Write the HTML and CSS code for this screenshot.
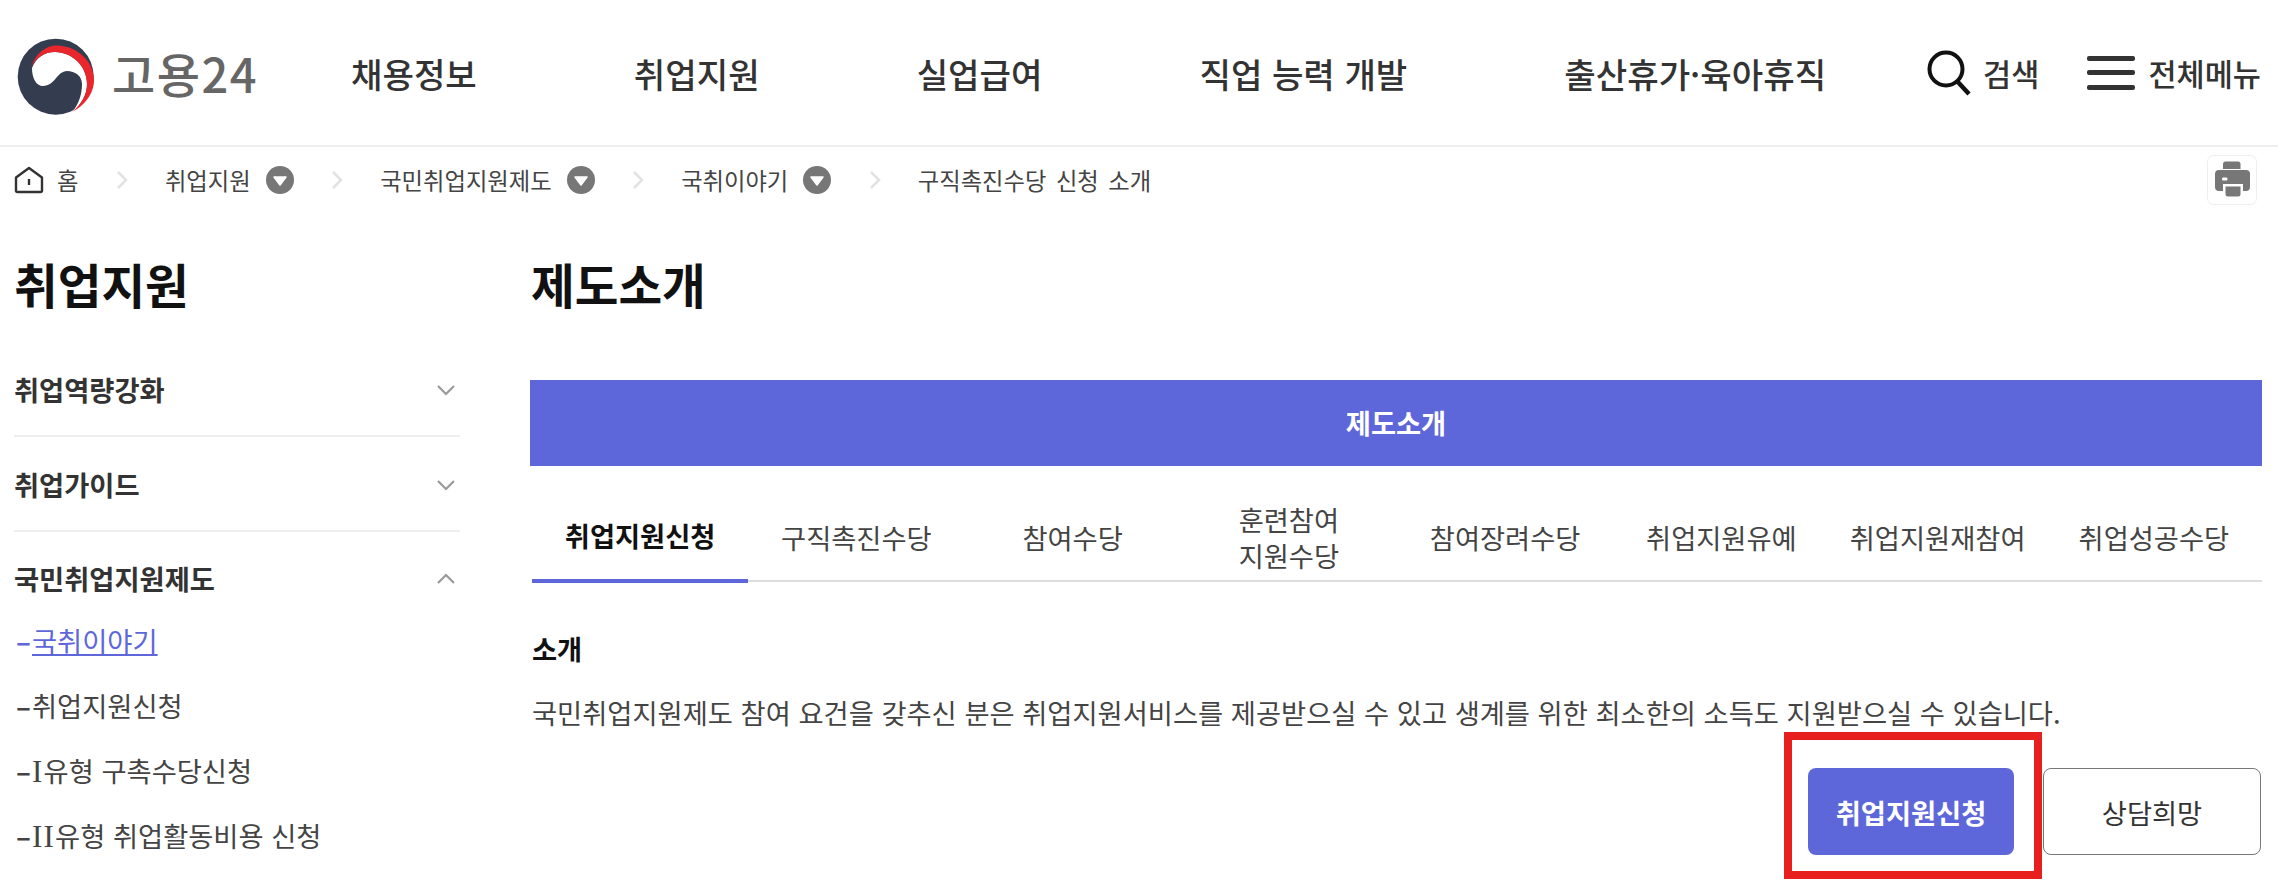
FILE: index.html
```html
<!DOCTYPE html>
<html lang="ko">
<head>
<meta charset="utf-8">
<title>고용24</title>
<link rel="stylesheet" href="styles.css">
</head>
<body>
<header class="site-header">
  <a class="logo">
    <svg class="logo-mark" viewBox="0 0 90 85" width="90" height="85">
      <circle cx="45.7" cy="42.7" r="38" fill="#343c50"/>
      <path fill="#fff" d="M22 34C26 24 34 18 45 18C62 18 77 32 77 50C77 60 72 70 62 78C69 70 72 60 72 50C72 42 65 37 57 37C47 37 45 52 33 52C26 52 22 44 22 34Z"/>
      <path fill="#fff" d="M62 78C72 72 84 60 84 46L86 80Z"/>
      <path fill="#e8262c" d="M21 33C26 18 38 11 47 11.5C68 12 84 28 84 46C84 60 74 72 62 78C72 70 77 60 77 50C77 32 62 18 45 18C34 18 26 24 21 33Z"/>
    </svg>
    <span class="logo-text">고용24</span>
  </a>
  <nav class="main-nav">
    <a>채용정보</a><a>취업지원</a><a>실업급여</a><a>직업 능력 개발</a><a>출산휴가·육아휴직</a>
  </nav>
  <div class="utils">
    <a class="util util-search">
      <svg viewBox="0 0 44 46" width="44" height="46"><circle cx="19" cy="19" r="16.5" fill="none" stroke="#111" stroke-width="4"/><path d="M30 31L42 44" stroke="#111" stroke-width="4.5" fill="none"/></svg>
      <span>검색</span>
    </a>
    <a class="util util-menu">
      <span class="burger"><i></i><i></i><i></i></span>
      <span>전체메뉴</span>
    </a>
  </div>
</header>

<div class="crumbs">
  <svg class="home" viewBox="0 0 30 28" width="30" height="28"><path d="M2 11.5L15 2L28 11.5V24.5Q28 26 26.500 26H3.500Q2 26 2 24.500Z" fill="none" stroke="#333" stroke-width="2.400" stroke-linejoin="round"/><path d="M15 13V19" stroke="#333" stroke-width="2.400"/></svg>
  <span class="crumb crumb-home">홈</span>
  <svg class="sep" viewBox="0 0 12 20" width="12" height="20"><path d="M2 2L10 10L2 18" fill="none" stroke="#e2e2e2" stroke-width="2.500"/></svg>
  <span class="crumb">취업지원</span><span class="drop"><svg viewBox="0 0 28 28" width="28" height="28"><circle cx="14" cy="14" r="14" fill="#777"/><path d="M8 11H20L14 19Z" fill="#fff" stroke="#fff" stroke-width="1.500" stroke-linejoin="round"/></svg></span>
  <svg class="sep" viewBox="0 0 12 20" width="12" height="20"><path d="M2 2L10 10L2 18" fill="none" stroke="#e2e2e2" stroke-width="2.500"/></svg>
  <span class="crumb">국민취업지원제도</span><span class="drop"><svg viewBox="0 0 28 28" width="28" height="28"><circle cx="14" cy="14" r="14" fill="#777"/><path d="M8 11H20L14 19Z" fill="#fff" stroke="#fff" stroke-width="1.500" stroke-linejoin="round"/></svg></span>
  <svg class="sep" viewBox="0 0 12 20" width="12" height="20"><path d="M2 2L10 10L2 18" fill="none" stroke="#e2e2e2" stroke-width="2.500"/></svg>
  <span class="crumb">국취이야기</span><span class="drop"><svg viewBox="0 0 28 28" width="28" height="28"><circle cx="14" cy="14" r="14" fill="#777"/><path d="M8 11H20L14 19Z" fill="#fff" stroke="#fff" stroke-width="1.500" stroke-linejoin="round"/></svg></span>
  <svg class="sep" viewBox="0 0 12 20" width="12" height="20"><path d="M2 2L10 10L2 18" fill="none" stroke="#e2e2e2" stroke-width="2.500"/></svg>
  <span class="crumb crumb-last">구직촉진수당 신청 소개</span>
  <a class="print">
    <svg viewBox="0 0 48 48" width="48" height="48"><path fill="#777" d="M15 13V8Q15 5.500 17.500 5.500H30Q32.500 5.500 32.500 8V13Z"/><path fill="#777" fill-rule="evenodd" d="M11 14H38Q42 14 42 18V31Q42 35 38 35H35V28H15V35H11Q7 35 7 31V18Q7 14 11 14ZM15 21.500H18.500Q19.500 21.500 19.500 23T18.500 24.500H15Q14 24.500 14 23T15 21.500Z"/><path fill="#777" d="M17.500 30.500H32.500V38Q32.500 40.500 30 40.500H20Q17.500 40.500 17.500 38Z"/></svg>
  </a>
</div>

<div class="layout">
  <aside class="side">
    <h2 class="side-title">취업지원</h2>
    <div class="side-row">취업역량강화<svg viewBox="0 0 20 12" width="20" height="12"><path d="M2 2L10 10L18 2" fill="none" stroke="#999" stroke-width="2.200"/></svg></div>
    <div class="side-row">취업가이드<svg viewBox="0 0 20 12" width="20" height="12"><path d="M2 2L10 10L18 2" fill="none" stroke="#999" stroke-width="2.200"/></svg></div>
    <div class="side-row side-row-open">국민취업지원제도<svg viewBox="0 0 20 12" width="20" height="12"><path d="M2 10L10 2L18 10" fill="none" stroke="#999" stroke-width="2.200"/></svg></div>
    <ul class="side-sub">
      <li class="current"><span class="dash">–</span><a>국취이야기</a></li>
      <li><span class="dash">–</span><a>취업지원신청</a></li>
      <li><span class="dash">–</span><a><span class="num">I</span>유형 구촉수당신청</a></li>
      <li><span class="dash">–</span><a><span class="num">II</span>유형 취업활동비용 신청</a></li>
    </ul>
  </aside>
  <main class="main">
    <h2 class="main-title">제도소개</h2>
    <div class="bar">제도소개</div>
    <div class="tabs">
      <a class="tab active">취업지원신청</a>
      <a class="tab">구직촉진수당</a>
      <a class="tab">참여수당</a>
      <a class="tab">훈련참여<br>지원수당</a>
      <a class="tab">참여장려수당</a>
      <a class="tab">취업지원유예</a>
      <a class="tab">취업지원재참여</a>
      <a class="tab">취업성공수당</a>
    </div>
    <h3 class="sec-title">소개</h3>
    <p class="sec-text">국민취업지원제도 참여 요건을 갖추신 분은 취업지원서비스를 제공받으실 수 있고 생계를 위한 최소한의 소득도 지원받으실 수 있습니다.</p>
    <div class="actions">
      <span class="mark"><a class="btn btn-primary">취업지원신청</a></span>
      <a class="btn btn-line">상담희망</a>
    </div>
  </main>
</div>
</body>
</html>
```
FILE: styles.css
```css
* { box-sizing: border-box; }
html, body { margin: 0; padding: 0; }
body {
  font-family: "Noto Sans CJK KR", "Noto Sans", sans-serif;
  color: #333;
  background: #fff;
  height: 881px;
  overflow: hidden;
}
a { color: inherit; text-decoration: none; }

.site-header {
  display: flex;
  align-items: center;
  height: 147px;
  border-bottom: 2px solid #eee;
  padding-left: 10px;
  padding-right: 17px;
}
.logo { display: flex; align-items: center; width: 341px; }
.logo-mark { margin-top: 8px; }
.logo-text {
  font-size: 47px;
  font-weight: 500;
  letter-spacing: 1.500px;
  color: #666;
  margin-left: 12px;
  line-height: 60px;
}
.main-nav {
  display: flex;
  gap: 157px;
  font-size: 34.200px;
  font-weight: 500;
  color: #333;
}
.utils { display: flex; align-items: center; margin-left: auto; gap: 48px; }
.util { display: flex; align-items: center; font-size: 30.600px; font-weight: 500; }
.util-search { gap: 12px; }
.util-menu { gap: 13px; }
.burger { display: flex; flex-direction: column; gap: 9.500px; width: 48px; }
.burger i { display: block; height: 5px; border-radius: 2px; background: #333; }

.crumbs {
  display: flex;
  align-items: center;
  height: 66px;
  padding-left: 14px;
  padding-right: 21px;
}
.crumb { font-size: 23.300px; color: #444; }
.crumb-home { margin-left: 13px; }
.crumb-last { word-spacing: 3px; }
.drop { display: flex; margin-left: 15px; }
.sep { margin: 0 37px 0 37.500px; }
.print {
  margin-left: auto;
  width: 50px;
  height: 50px;
  border: 1px solid #eee;
  border-radius: 7px;
  display: flex;
}

.layout { display: flex; padding: 0 16px 0 14px; gap: 70px; }
.side { width: 446px; flex: none; }
.side-title, .main-title {
  margin: 0;
  font-size: 47.500px;
  font-weight: 700;
  color: #111;
  line-height: 60px;
  padding-top: 41px;
}
.side-title { margin-bottom: 28px; }
.side-row {
  display: flex;
  align-items: center;
  justify-content: space-between;
  height: 95px;
  border-bottom: 2px solid #eee;
  font-size: 27.300px;
  font-weight: 700;
  color: #333;
  padding-right: 4px;
}
.side-row svg { margin-top: 2px; }
.side-row-open { border-bottom: 0; height: 75px; padding-top: 17px; }
.side-sub {
  list-style: none;
  margin: 0;
  padding: 0;
  font-size: 27.300px;
  color: #444;
}
.side-sub li { height: 65px; display: flex; align-items: center; padding-left: 2px; }
.side-sub .dash { width: 16px; font-weight: 700; }
.num { font-family: "Liberation Serif", serif; font-size: 31px; letter-spacing: 1.200px; }
.current { color: #5e67da; }
.current a { text-decoration: underline; }

.main { flex: 1; min-width: 0; }
.main-title { padding-left: 1px; height: 101px; margin-bottom: 66px; }
.bar {
  height: 86px;
  background: #5e67da;
  color: #fff;
  font-size: 27.300px;
  font-weight: 700;
  display: flex;
  align-items: center;
  justify-content: center;
  padding-bottom: 2px;
}
.tabs {
  display: flex;
  margin: 29px 0 0 2px;
  height: 87px;
  border-bottom: 2px solid #ddd;
}
.tab {
  flex: 1;
  display: flex;
  align-items: center;
  justify-content: center;
  text-align: center;
  font-size: 27.300px;
  line-height: 36px;
  color: #444;
  padding-bottom: 4px;
  margin-bottom: -2px;
}
.tab.active {
  font-weight: 700;
  color: #111;
  border-bottom: 4px solid #5e67da;
  margin-bottom: -3px;
}
.sec-title {
  margin: 46px 0 0 2px;
  font-size: 27.300px;
  font-weight: 700;
  color: #111;
  line-height: 40px;
}
.sec-text {
  margin: 24px 0 0 2px;
  font-size: 27.300px;
  line-height: 40px;
  color: #444;
}
.actions { display: flex; justify-content: flex-end; gap: 29px; margin-top: 36px; padding-right: 1px; }
.mark { position: relative; display: flex; }
.mark::after {
  content: "";
  position: absolute;
  left: -24px; right: -28px; top: -36px; bottom: -24px;
  border: 8px solid #e81f1f;
}
.btn {
  display: flex;
  align-items: center;
  justify-content: center;
  height: 87px;
  border-radius: 8px;
  font-size: 27.300px;
}
.btn-primary { width: 206px; background: #5e67da; color: #fff; font-weight: 700; }
.btn-line { width: 218px; border: 1px solid #777; color: #333; }
```
